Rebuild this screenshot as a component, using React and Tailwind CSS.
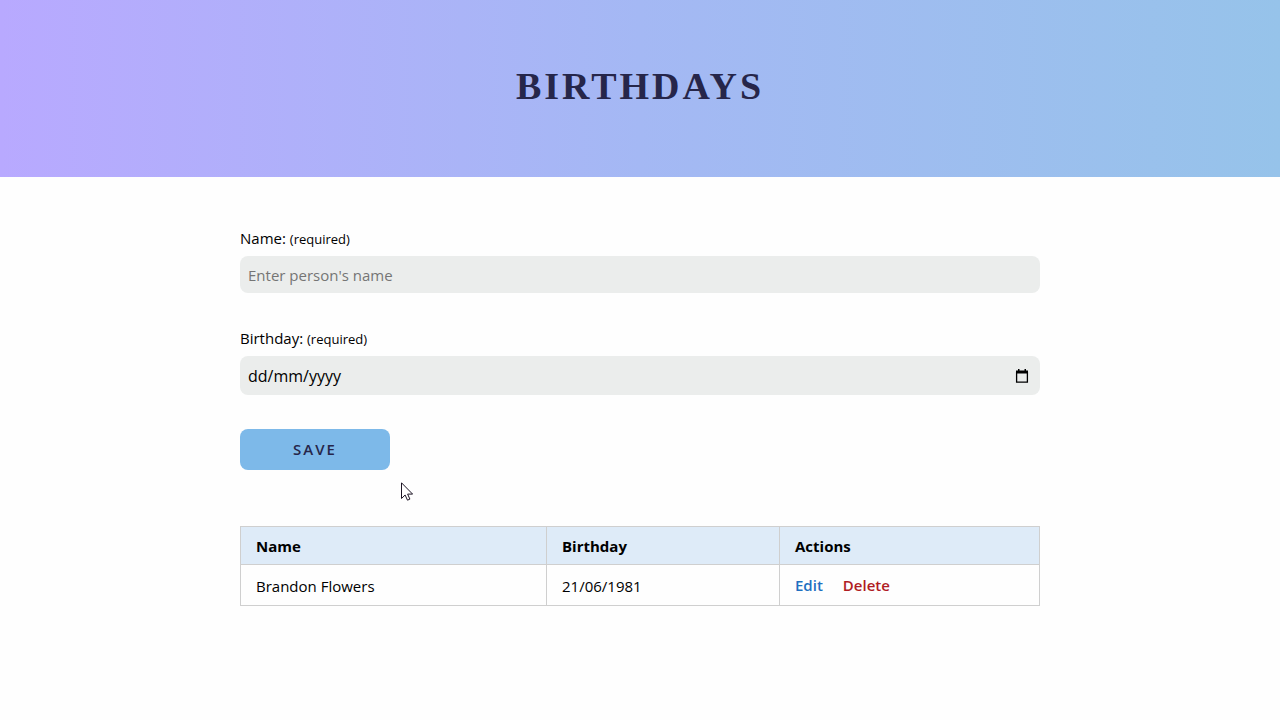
import { useState } from "react";

const people = [{ id: 1, name: "Brandon Flowers", birthday: "21/06/1981" }];

function CalendarIcon() {
  return (
    <svg viewBox="0 0 14 16" className="h-4 w-3.5" fill="none" aria-hidden="true">
      <path d="M1.6 4v10.2h10.8V4" stroke="#000" strokeWidth="1.3" />
      <path d="M1 2.5h12v3H1zM3 1h1.5v2H3zM9.5 1H11v2H9.5z" fill="#000" />
    </svg>
  );
}

function Cursor() {
  return (
    <svg
      viewBox="0 0 12 19"
      className="pointer-events-none absolute top-[53px] left-[161px] h-[19px] w-3"
      aria-hidden="true"
    >
      <path
        d="M0.5 0.8v15.7l3.6-3.5 2.4 5.2 2.4-1.1-2.3-5h5z"
        fill="#fff"
        stroke="#1c1424"
        strokeWidth="1"
      />
    </svg>
  );
}

function Field({ id, label, children }) {
  return (
    <div className="mb-[34px]">
      <label htmlFor={id} className="mb-[7px] block leading-[22px]">
        {label} <span className="text-[13px] leading-none">(required)</span>
      </label>
      {children}
    </div>
  );
}

export default function App() {
  const [name, setName] = useState("");
  const [birthday, setBirthday] = useState("");

  return (
    <div className="min-h-screen bg-[#fefefe] font-['Open_Sans','Noto_Sans',sans-serif] text-[15px] text-black">
      <header className="bg-linear-to-r from-[#b8a9ff] via-[#a4b8f4] to-[#96c3ea] px-4 pt-15 pb-16">
        <h1 className="text-center font-['Liberation_Serif',serif] text-[38px] leading-[53px] font-bold tracking-[3px] text-[#26264a] uppercase">
          Birthdays
        </h1>
      </header>

      <main className="mx-auto max-w-[800px] pt-[50px] pb-12">
        <form onSubmit={(event) => event.preventDefault()}>
          <Field id="name" label="Name:">
            <input
              id="name"
              type="text"
              value={name}
              onChange={(event) => setName(event.target.value)}
              placeholder="Enter person's name"
              className="block h-[37px] w-full rounded-lg bg-[#ebedec] px-2 placeholder:text-[#757575]"
            />
          </Field>

          <Field id="birthday" label="Birthday:">
            <div className="flex h-[39px] items-center rounded-lg bg-[#ebedec] pr-[11px] pl-2">
              <input
                id="birthday"
                type="text"
                value={birthday}
                onChange={(event) => setBirthday(event.target.value)}
                placeholder="dd/mm/yyyy"
                className="h-full min-w-0 flex-1 bg-transparent text-base placeholder:text-black"
              />
              <button type="button" aria-label="Open calendar">
                <CalendarIcon />
              </button>
            </div>
          </Field>

          <div className="relative">
            <button
              type="submit"
              className="block h-[41px] w-[150px] rounded-lg bg-[#7db9e9] font-semibold tracking-[2px] text-[#26264a] uppercase"
            >
              Save
            </button>
            <Cursor />
          </div>
        </form>

        <table className="mt-14 w-full table-fixed border-collapse text-left">
          <colgroup>
            <col className="w-[306px]" />
            <col className="w-[233px]" />
            <col />
          </colgroup>
          <thead>
            <tr className="h-[38px] bg-[#deebf8]">
              <th className="border border-[#cfcfcf] px-[15px] pt-0.5 font-bold">Name</th>
              <th className="border border-[#cfcfcf] px-[15px] pt-0.5 font-bold">Birthday</th>
              <th className="border border-[#cfcfcf] px-[15px] pt-0.5 font-bold">Actions</th>
            </tr>
          </thead>
          <tbody>
            {people.map((person) => (
              <tr key={person.id} className="h-[41px]">
                <td className="border border-[#cfcfcf] px-[15px] pt-0.5">{person.name}</td>
                <td className="border border-[#cfcfcf] px-[15px] pt-0.5">{person.birthday}</td>
                <td className="border border-[#cfcfcf] px-[15px]">
                  <div className="flex gap-5 font-semibold">
                    <button type="button" className="text-[#1f70c1]">Edit</button>
                    <button type="button" className="text-[#b01c24]">Delete</button>
                  </div>
                </td>
              </tr>
            ))}
          </tbody>
        </table>
      </main>
    </div>
  );
}
